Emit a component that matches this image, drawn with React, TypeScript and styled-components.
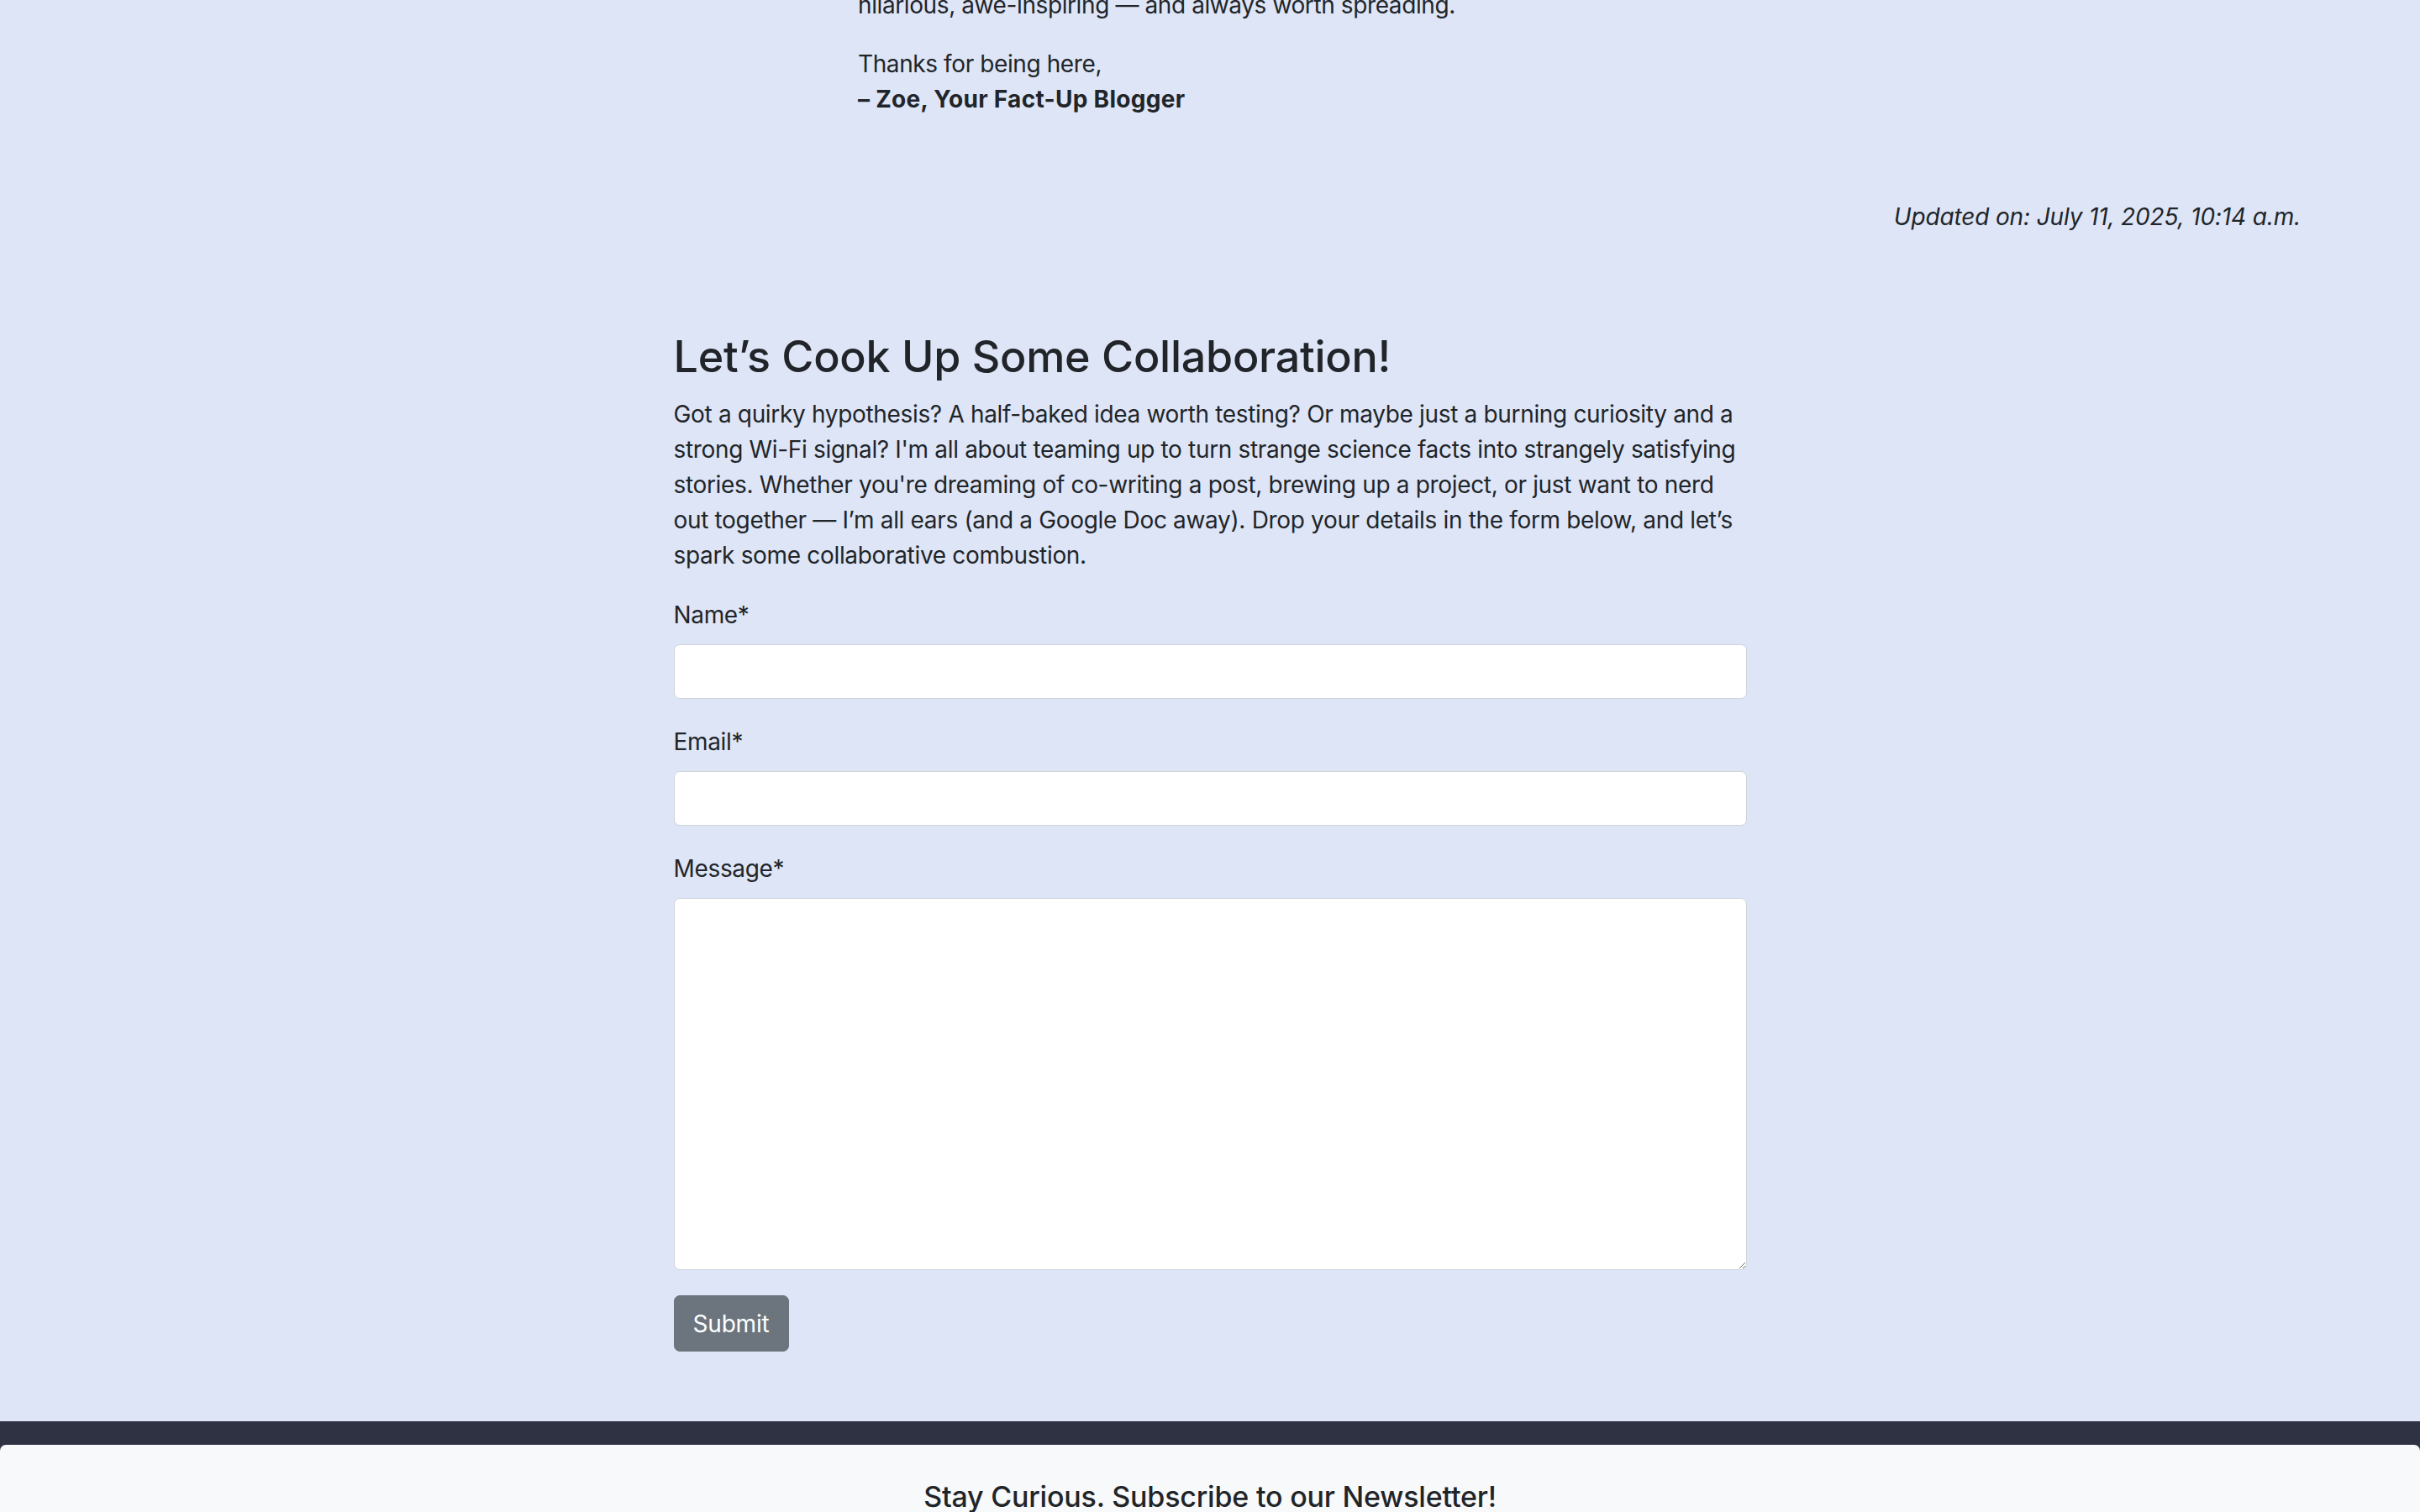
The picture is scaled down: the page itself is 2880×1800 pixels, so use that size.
import React from "react";
import styled, { createGlobalStyle } from "styled-components";

const GlobalStyle = createGlobalStyle`
  html, body {
    margin: 0;
    padding: 0;
  }
  body {
    background: #dee5f7;
    color: #212529;
    font-family: Inter, "Noto Sans", "Liberation Sans", sans-serif;
    font-size: 28px;
    line-height: 1.5;
    letter-spacing: -0.33px;
    overflow: hidden;
  }
  * { box-sizing: border-box; }
`;

const Page = styled.div`
  display: flex;
  flex-direction: column;
  min-height: 1800px;
`;

const Article = styled.article`
  width: 838px;
  margin: -15px auto 0;
  letter-spacing: -0.4px;
`;

const Para = styled.p`
  margin: 0 0 28px;
  &:last-child { margin-bottom: 0; }
`;

const Signature = styled.strong`
  font-weight: 700;
  letter-spacing: 0.3px;
`;

const Updated = styled.p`
  margin: 98px 0 0;
  padding-right: 142px;
  text-align: right;
  font-style: italic;
  letter-spacing: -0.15px;
`;

const Contact = styled.section`
  width: 1277px;
  margin: 115px auto 0;
  padding-bottom: 83px;
`;

const Heading = styled.h3`
  margin: 0 0 16px;
  font-size: 52px;
  font-weight: 500;
  line-height: 1.2;
  letter-spacing: -0.25px;
`;

const Intro = styled.p`
  margin: 0 0 29px;
`;

const Field = styled.div`
  margin-bottom: 30px;
`;

const Label = styled.label`
  display: block;
  margin-bottom: 14px;
`;

const Input = styled.input`
  display: block;
  width: 100%;
  height: 65px;
  padding: 10px 21px;
  font: inherit;
  color: #212529;
  background: #fff;
  border: 1px solid #ced4da;
  border-radius: 7px;
  outline: none;
`;

const TextArea = styled.textarea`
  display: block;
  width: 100%;
  height: 443px;
  padding: 10px 21px;
  font: inherit;
  color: #212529;
  background: #fff;
  border: 1px solid #ced4da;
  border-radius: 7px;
  outline: none;
  resize: vertical;
`;

const SubmitButton = styled.button`
  display: inline-block;
  width: 137px;
  height: 67px;
  padding: 0;
  font: inherit;
  letter-spacing: -0.2px;
  color: #fff;
  background: #6c757d;
  border: 1px solid #6c757d;
  border-radius: 7px;
  cursor: pointer;
`;

const Footer = styled.footer`
  background: #2e3243;
  padding-top: 28px;
  flex: 1;
  display: flex;
`;

const FooterPanel = styled.div`
  flex: 1;
  background: #f8f9fa;
  border-radius: 7px 7px 0 0;
  padding-top: 42px;
  text-align: center;
`;

const FooterTitle = styled.h5`
  margin: 0;
  font-size: 34px;
  font-weight: 500;
  line-height: 1.2;
  letter-spacing: -0.2px;
`;

export default function App() {
  return (
    <>
      <GlobalStyle />
      <Page>
        <Article>
          <Para>hilarious, awe-inspiring — and always worth spreading.</Para>
          <Para>
            Thanks for being here,
            <br />
            <Signature>– Zoe, Your Fact-Up Blogger</Signature>
          </Para>
        </Article>
        <Updated>Updated on: July 11, 2025, 10:14 a.m.</Updated>
        <Contact>
          <Heading>Let’s Cook Up Some Collaboration!</Heading>
          <Intro>
            Got a quirky hypothesis? A half-baked idea worth testing? Or maybe just a burning curiosity and a strong
            Wi-Fi signal? I'm all about teaming up to turn strange science facts into strangely satisfying stories.
            Whether you're dreaming of co-writing a post, brewing up a project, or just want to nerd out together — I’m
            all ears (and a Google Doc away). Drop your details in the form below, and let’s spark some collaborative
            combustion.
          </Intro>
          <form onSubmit={(e) => e.preventDefault()}>
            <Field>
              <Label htmlFor="name">Name*</Label>
              <Input id="name" type="text" />
            </Field>
            <Field>
              <Label htmlFor="email">Email*</Label>
              <Input id="email" type="email" />
            </Field>
            <Field>
              <Label htmlFor="message">Message*</Label>
              <TextArea id="message" rows={10} />
            </Field>
            <SubmitButton type="submit">Submit</SubmitButton>
          </form>
        </Contact>
        <Footer>
          <FooterPanel>
            <FooterTitle>Stay Curious. Subscribe to our Newsletter!</FooterTitle>
          </FooterPanel>
        </Footer>
      </Page>
    </>
  );
}
